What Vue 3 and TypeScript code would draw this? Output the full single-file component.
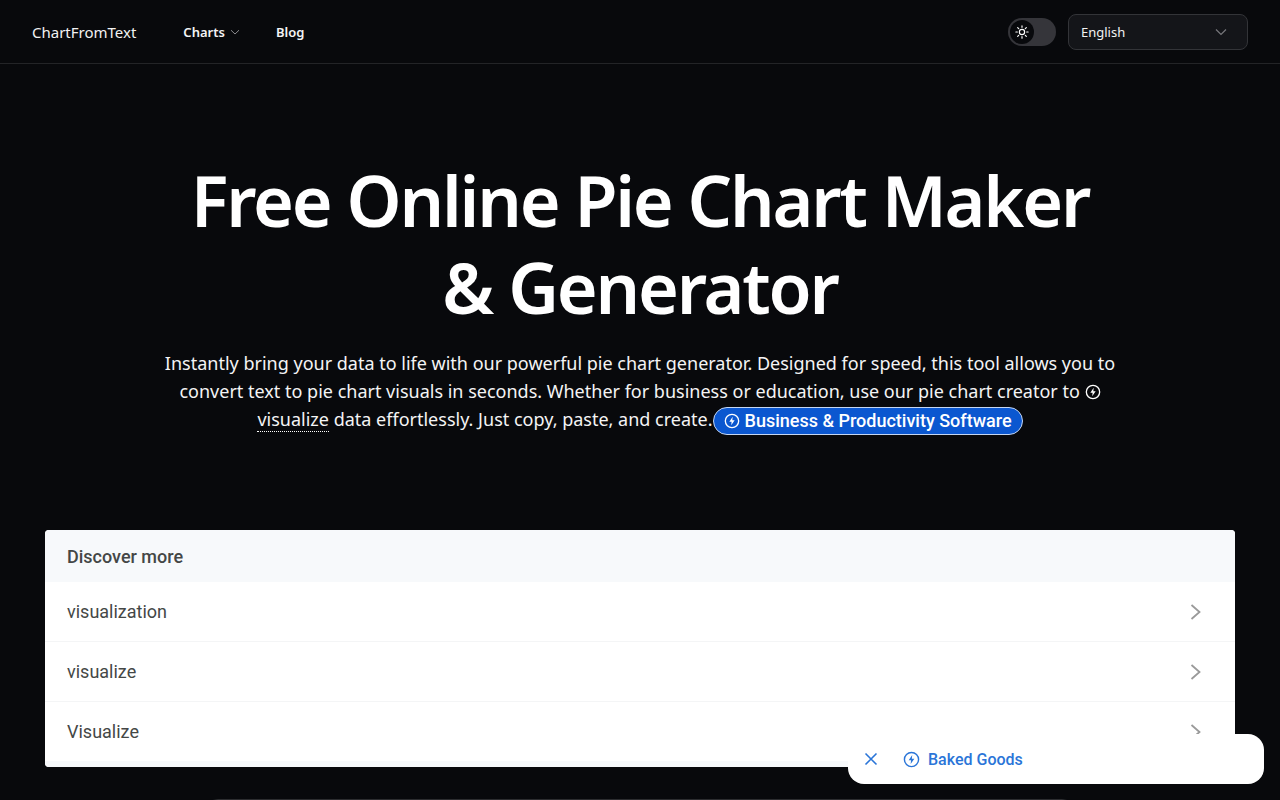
<script setup lang="ts">
const rows: string[] = ['visualization', 'visualize', 'Visualize']
</script>

<template>
  <div class="page">
    <header class="nav">
      <div class="nav-left">
        <span class="brand">ChartFromText</span>
        <nav class="links">
          <span class="link">Charts
            <svg class="caret" width="10" height="10" viewBox="0 0 10 10"><path d="M1 3.2 5 7l4-3.8" fill="none" stroke="#8a8a8e" stroke-width="1"/></svg>
          </span>
          <span class="link">Blog</span>
        </nav>
      </div>
      <div class="nav-right">
        <div class="toggle">
          <span class="knob">
            <svg width="14" height="14" viewBox="0 0 24 24" fill="none" stroke="#fff" stroke-width="2" stroke-linecap="round"><circle cx="12" cy="12" r="4.5"/><path d="M12 1.5v2.5M12 20v2.5M1.5 12H4M20 12h2.5M4.6 4.6l1.7 1.7M17.7 17.7l1.7 1.7M4.6 19.4l1.7-1.7M17.7 6.3l1.7-1.7"/></svg>
          </span>
        </div>
        <div class="lang">
          <span>English</span>
          <svg width="12" height="12" viewBox="0 0 12 12"><path d="M1 3.5 6 8.5l5-5" fill="none" stroke="#77777b" stroke-width="1.2"/></svg>
        </div>
      </div>
    </header>

    <section class="hero">
      <h1>Free Online Pie Chart Maker &amp; Generator</h1>
      <p>
        Instantly bring your data to life with our powerful pie chart generator. Designed for speed, this tool allows you to convert text to pie chart visuals in seconds. Whether for business or education, use our pie chart creator to
        <svg class="bolt-inline" width="16" height="16" viewBox="0 0 24 24" fill="none"><circle cx="12" cy="12" r="10" stroke="#fff" stroke-width="2"/><path d="M13 5.5 8 13.2h3.4L10.8 18.5 16 10.8h-3.5z" fill="#fff"/></svg>
        <span class="dotted">visualize</span> data effortlessly. Just copy, paste, and create.<span class="pill"><svg width="16" height="16" viewBox="0 0 24 24" fill="none"><circle cx="12" cy="12" r="10" stroke="#fff" stroke-width="2"/><path d="M13 5.5 8 13.2h3.4L10.8 18.5 16 10.8h-3.5z" fill="#fff"/></svg>Business &amp; Productivity Software</span>
      </p>
    </section>

    <section class="card">
      <div class="card-head">Discover more</div>
      <div v-for="row in rows" :key="row" class="row">
        <span>{{ row }}</span>
        <svg width="14" height="20" viewBox="0 0 14 20"><path d="M2.5 3 10.5 10l-8 7" fill="none" stroke="#9a9a9a" stroke-width="1.8"/></svg>
      </div>
      <div class="card-foot"></div>
    </section>

    <div class="panel"></div>

    <div class="floater">
      <svg width="14" height="14" viewBox="0 0 14 14"><path d="M1.5 1.5l11 11M12.5 1.5l-11 11" stroke="#2a75d8" stroke-width="1.6" fill="none"/></svg>
      <span class="float-item">
        <svg width="17" height="17" viewBox="0 0 24 24" fill="none"><circle cx="12" cy="12" r="10" stroke="#2a75d8" stroke-width="2"/><path d="M13 5.5 8 13.2h3.4L10.8 18.5 16 10.8h-3.5z" fill="#2a75d8"/></svg>
        Baked Goods
      </span>
    </div>
  </div>
</template>

<style>
html, body { margin: 0; background: #08090c; overflow: hidden; }
</style>

<style scoped>
.page {
  height: 800px;
  overflow: hidden;
  background: #08090c;
  color: #fff;
  font-family: "Noto Sans", "Open Sans", sans-serif;
  display: flex;
  flex-direction: column;
  align-items: center;
}
.nav {
  align-self: stretch;
  height: 63px;
  flex: none;
  border-bottom: 1px solid #232427;
  display: flex;
  align-items: center;
  justify-content: space-between;
  padding: 0 32px;
}
.nav-left { display: flex; align-items: center; gap: 47px; }
.brand { font-size: 15px; color: #f2f2f2; }
.links { display: flex; align-items: center; gap: 36px; }
.link { font-size: 13px; font-weight: 600; color: #f4f4f5; display: flex; align-items: center; gap: 5px; }
.nav-right { display: flex; align-items: center; gap: 12px; }
.toggle {
  width: 48px; height: 28px; box-sizing: border-box;
  border-radius: 14px; background: #35353a; padding: 2px;
  display: flex; align-items: center;
}
.knob {
  width: 24px; height: 24px; border-radius: 50%; background: #08090c;
  display: flex; align-items: center; justify-content: center;
}
.lang {
  width: 180px; height: 36px; box-sizing: border-box;
  border: 1px solid #333438; border-radius: 8px; background: #141519;
  display: flex; align-items: center; justify-content: space-between;
  padding: 0 20px 0 12px; font-size: 13px; color: #f2f2f2;
}
.hero {
  width: 960px;
  padding-top: 93px;
  text-align: center;
}
h1 {
  margin: 0;
  font-size: 70px;
  line-height: 87px;
  font-weight: 600;
  letter-spacing: -2.2px;
}
p {
  margin: 18px 0 0;
  font-size: 18px;
  line-height: 28px;
  color: #f4f4f5;
}
.bolt-inline { vertical-align: -2px; }
.dotted { border-bottom: 1px dotted #fff; line-height: 1; }
.pill {
  display: inline-flex; align-items: center; gap: 5px;
  height: 28px; box-sizing: border-box;
  padding: 0 10px; border: 1px solid #c5d6f2; border-radius: 14px;
  background: #0b57d0; color: #fff;
  font-family: Roboto, sans-serif; font-weight: 500; font-size: 18px;
  vertical-align: middle;
}
.card {
  width: 1190px;
  margin-top: 95px;
  flex: none;
  background: #fff;
  border-radius: 4px;
  overflow: hidden;
  color: #444746;
  font-family: Roboto, sans-serif;
}
.card-head {
  height: 52px;
  background: #f7f9fb;
  display: flex; align-items: center;
  padding: 0 22px;
  font-size: 18px; font-weight: 500;
}
.row {
  height: 59px;
  border-bottom: 1px solid #f4f5f6;
  display: flex; align-items: center; justify-content: space-between;
  padding: 0 32px 0 22px;
  font-size: 18px;
}
.row:last-of-type { border-bottom: 0; }
.card-foot { height: 6px; margin-top: -1px; background: #f7f9fb; }
.panel {
  width: 870px; height: 200px; flex: none;
  margin-top: 32px;
  border: 1px solid #2c2d30; border-radius: 14px; background: #101114;
}
.floater {
  position: fixed;
  left: 848px; top: 734px;
  width: 416px; height: 50px; box-sizing: border-box;
  background: #fff; border-radius: 16px;
  display: flex; align-items: center; gap: 25px;
  padding-left: 16px;
}
.float-item {
  display: flex; align-items: center; gap: 8px;
  color: #2a75d8; font-family: Roboto, sans-serif; font-size: 16px; font-weight: 500;
}
</style>
